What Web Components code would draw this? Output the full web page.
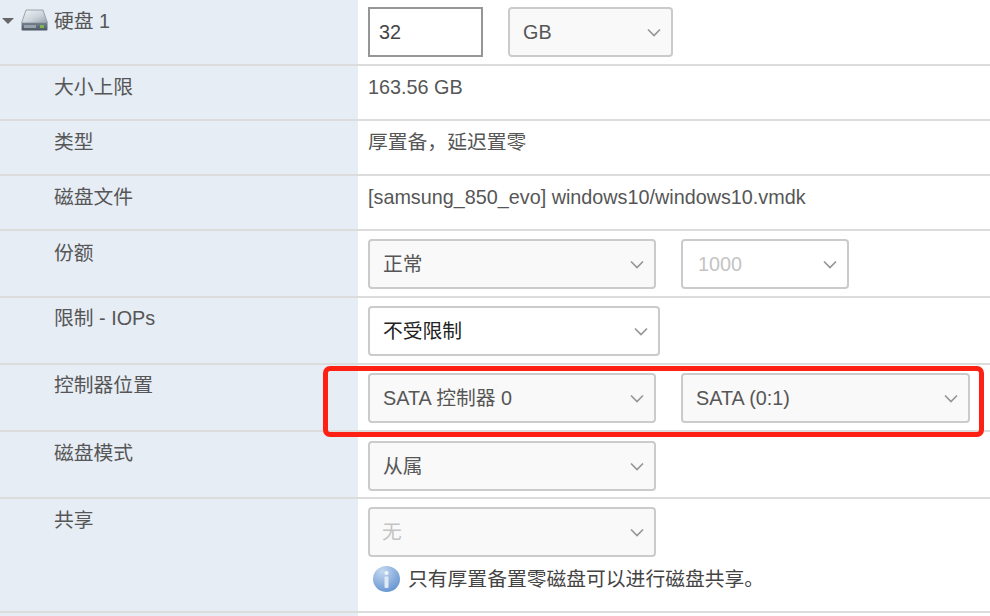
<!DOCTYPE html>
<html lang="zh">
<head>
<meta charset="utf-8">
<title>硬盘 1</title>
<style>
  html, body { margin: 0; padding: 0; background: #fff; overflow: hidden; }
  body {
    font-family: "Liberation Sans", "Noto Sans CJK SC", sans-serif;
    font-size: 19.8px;
    color: #565656;
  }
</style>
</head>
<body>
<disk-form>
  <disk-row label="硬盘 1" expander h="66" pad="7" ltop="8">
    <size-input value="32"></size-input>
    <disk-select style="--w:165px;--ml:25px">GB</disk-select>
  </disk-row>
  <disk-row label="大小上限" h="55"><plain-value>163.56 GB</plain-value></disk-row>
  <disk-row label="类型" h="55"><plain-value>厚置备，延迟置零</plain-value></disk-row>
  <disk-row label="磁盘文件" h="55"><plain-value>[samsung_850_evo] windows10/windows10.vmdk</plain-value></disk-row>
  <disk-row label="份额" h="67" pad="8" ltop="9">
    <disk-select style="--w:288px">正常</disk-select>
    <disk-select style="--w:168px;--ml:25px;--bg:#fff;--fg:#c4c4c4;--pl:15px">1000</disk-select>
  </disk-row>
  <disk-row label="限制 - IOPs" h="67" pad="8" ltop="7">
    <disk-select style="--w:292px;--bg:#fff;--fg:#222">不受限制</disk-select>
  </disk-row>
  <disk-row label="控制器位置" h="67" pad="8" ltop="7">
    <disk-select style="--w:288px">SATA 控制器 0</disk-select>
    <disk-select style="--w:289px;--ml:25px">SATA (0:1)</disk-select>
  </disk-row>
  <disk-row label="磁盘模式" h="67" pad="9" ltop="8">
    <disk-select style="--w:288px">从属</disk-select>
  </disk-row>
  <disk-row label="共享" h="114" pad="8" ltop="8">
    <div style="display:flex;flex-direction:column">
      <disk-select style="--w:288px;--fg:#c4c4c4;--pl:12px">无</disk-select>
      <info-note>只有厚置备置零磁盘可以进行磁盘共享。</info-note>
    </div>
  </disk-row>
  <disk-row h="10"></disk-row>
  <red-mark></red-mark>
</disk-form>

<script>
class DiskForm extends HTMLElement {
  constructor() {
    super();
    this.attachShadow({ mode: "open" }).innerHTML = `
      <style>
        :host { display: block; position: relative; width: 990px; height: 616px; overflow: hidden; }
      </style>
      <slot></slot>`;
  }
}

class DiskRow extends HTMLElement {
  connectedCallback() {
    const h = this.getAttribute("h");
    const label = this.getAttribute("label") || "";
    const pad = this.getAttribute("pad") || 7;
    const ltop = this.getAttribute("ltop") || 8;
    const arrow = this.hasAttribute("expander") ? `
      <svg class="tri" width="12" height="6" viewBox="0 0 12 6"><path d="M0 0H12L6 6Z" fill="#666"/></svg>
      <svg class="hdd" width="27" height="22" viewBox="0 0 27 22">
        <defs>
          <linearGradient id="top" x1="0" y1="0" x2="1" y2="1">
            <stop offset="0" stop-color="#f0f3f6"/><stop offset=".55" stop-color="#cdd4db"/><stop offset="1" stop-color="#98a3ae"/>
          </linearGradient>
          <linearGradient id="front" x1="0" y1="0" x2="0" y2="1">
            <stop offset="0" stop-color="#74808d"/><stop offset="1" stop-color="#4c5764"/>
          </linearGradient>
        </defs>
        <path d="M5 1H22L26.500 14H.5Z" fill="url(#top)" stroke="#8a939d" stroke-width=".8"/>
        <rect x=".5" y="14" width="26" height="7.500" rx="1" fill="url(#front)"/>
        <rect x="3" y="16" width="12" height="3" fill="#98a2ac"/>
        <rect x="19" y="16" width="4" height="3" fill="#7cb84f"/>
      </svg>` : "";
    this.attachShadow({ mode: "open" }).innerHTML = `
      <style>
        :host { display: grid; grid-template-columns: 358px 1fr; height: ${h}px; box-sizing: border-box; border-bottom: 2px solid #dcdcdc; }
        .name { background: #e6edf5; padding: ${ltop}px 0 0 54px; position: relative; line-height: 26px; }
        .value { padding: ${pad}px 0 0 10px; display: flex; align-items: flex-start; }
        .tri { position: absolute; left: 2px; top: 18px; }
        .hdd { position: absolute; left: 21px; top: 9px; }
      </style>
      <div class="name">${arrow}${label}</div>
      <div class="value"><slot></slot></div>`;
  }
}

class DiskSelect extends HTMLElement {
  constructor() {
    super();
    this.attachShadow({ mode: "open" }).innerHTML = `
      <style>
        :host {
          display: flex; align-items: center; justify-content: space-between; box-sizing: border-box;
          width: var(--w, 288px); height: 50px; margin-left: var(--ml, 0);
          padding: 0 10px 0 var(--pl, 13px); line-height: 26px;
          background: var(--bg, #f9f9f9); color: var(--fg, #565656);
          border: 2px solid #cbcbcb; border-radius: 4px;
        }
        svg { flex: none; }
      </style>
      <slot></slot>
      <svg width="14" height="9" viewBox="0 0 14 9"><path d="M1 1.500L7 7.500L13 1.500" fill="none" stroke="#969696" stroke-width="1.700"/></svg>`;
  }
}

class SizeInput extends HTMLElement {
  constructor() {
    super();
    this.attachShadow({ mode: "open" }).innerHTML = `
      <style>
        :host { display: flex; align-items: center; box-sizing: border-box; width: 115px; height: 50px; padding-left: 9px; border: 2px solid #969696; color: #444; }
      </style>
      <span id="v"></span>`;
  }
  connectedCallback() {
    this.shadowRoot.getElementById("v").textContent = this.getAttribute("value");
  }
}

class PlainValue extends HTMLElement {
  constructor() {
    super();
    this.attachShadow({ mode: "open" }).innerHTML = `
      <style>:host { display: block; line-height: 26px; margin-top: 1px; }</style>
      <slot></slot>`;
  }
}

class InfoNote extends HTMLElement {
  constructor() {
    super();
    this.attachShadow({ mode: "open" }).innerHTML = `
      <style>
        :host { display: flex; align-items: center; gap: 8px; margin: 9px 0 0 5px; line-height: 26px; color: #444; }
        svg { flex: none; }
      </style>
      <svg width="27" height="26" viewBox="0 0 27 26">
        <defs>
          <radialGradient id="b" cx=".35" cy=".2" r=".95">
            <stop offset="0" stop-color="#c4d8f0"/><stop offset="1" stop-color="#5a8ccd"/>
          </radialGradient>
        </defs>
        <ellipse cx="13.500" cy="13" rx="13.500" ry="13" fill="url(#b)"/>
        <circle cx="13.500" cy="7" r="2.100" fill="#eef4fb"/>
        <rect x="11.500" y="10.500" width="4" height="11.500" rx="1" fill="#dfe9f6"/>
      </svg>
      <span><slot></slot></span>`;
  }
}

class RedMark extends HTMLElement {
  constructor() {
    super();
    this.attachShadow({ mode: "open" }).innerHTML = `
      <style>
        :host { position: absolute; left: 323px; top: 366px; width: 661px; height: 71px; box-sizing: border-box; border: 5px solid #ff2014; border-radius: 7px; }
      </style>`;
  }
}

customElements.define("disk-form", DiskForm);
customElements.define("disk-row", DiskRow);
customElements.define("disk-select", DiskSelect);
customElements.define("size-input", SizeInput);
customElements.define("plain-value", PlainValue);
customElements.define("info-note", InfoNote);
customElements.define("red-mark", RedMark);
</script>
</body>
</html>
